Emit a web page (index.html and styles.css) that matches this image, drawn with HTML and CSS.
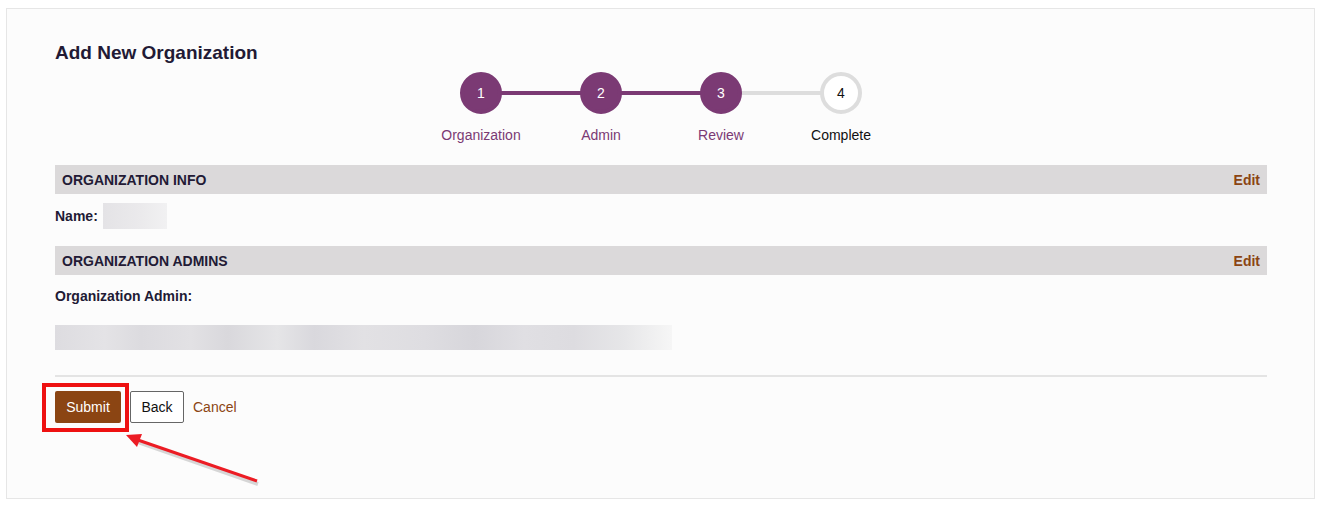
FILE: index.html
```html
<!DOCTYPE html>
<html lang="en">
<head>
    <meta charset="UTF-8">
    <meta name="viewport" content="width=device-width, initial-scale=1.0">
    <title>Add New Organization</title>
    <link rel="stylesheet" href="styles.css">
</head>
<body>
    <div class="card">
        <h1>Add New Organization</h1>

        <div class="stepper">
            <div class="step done">
                <div class="circle">1</div>
                <div class="label">Organization</div>
            </div>
            <div class="step done">
                <div class="circle">2</div>
                <div class="label">Admin</div>
            </div>
            <div class="step done">
                <div class="circle">3</div>
                <div class="label">Review</div>
            </div>
            <div class="step">
                <div class="circle">4</div>
                <div class="label">Complete</div>
            </div>
        </div>

        <div class="section-header">
            <span>ORGANIZATION INFO</span>
            <a href="#" class="edit-link">Edit</a>
        </div>
        <div class="name-row">
            <span class="field-label">Name:</span>
            <span class="blur-box"></span>
        </div>

        <div class="section-header second">
            <span>ORGANIZATION ADMINS</span>
            <a href="#" class="edit-link">Edit</a>
        </div>
        <div class="field-label admin-label">Organization Admin:</div>
        <div class="blur-bar"></div>

        <hr class="divider">

        <div class="actions">
            <span class="submit-wrap">
                <button type="button" class="btn-submit">Submit</button>
                <span class="highlight"></span>
                <svg class="arrow" width="150" height="60" viewBox="0 0 150 60">
                    <line x1="140" y1="54" x2="20" y2="12" stroke="rgba(0,0,0,0.15)" stroke-width="4" transform="translate(1,2)"/>
                    <line x1="140" y1="53" x2="18" y2="11" stroke="#ec1c24" stroke-width="3"/>
                    <polygon points="9,7 25,6 20,19" fill="#ec1c24"/>
                </svg>
            </span>
            <button type="button" class="btn-back">Back</button>
            <a href="#" class="cancel-link">Cancel</a>
        </div>
    </div>
</body>
</html>
```

FILE: styles.css
```css
body {
    font-family: "Liberation Sans", Arial, sans-serif;
    margin: 0;
    padding: 0;
    background-color: #fff;
    color: #221a35;
}

.card {
    margin: 8px 10px 9px 6px;
    height: 491px;
    box-sizing: border-box;
    background-color: #fcfcfc;
    border: 1px solid #e6e6e6;
    padding: 32px 47px 0 48px;
}

.card h1 {
    font-size: 19px;
    line-height: 24px;
    margin: 0;
    color: #221a35;
}

.stepper {
    display: flex;
    justify-content: center;
    margin-top: 7px;
}

.step {
    position: relative;
    width: 120px;
    display: flex;
    flex-direction: column;
    align-items: center;
}

/* connector line from the previous step */
.step + .step::before {
    content: "";
    position: absolute;
    top: 19px;
    left: -60px;
    width: 120px;
    height: 4px;
    background-color: #dddddd;
}

.step.done + .step.done::before {
    background-color: #7b3a74;
}

.circle {
    position: relative;
    z-index: 1;
    width: 42px;
    height: 42px;
    box-sizing: border-box;
    border-radius: 50%;
    border: 4px solid #dddddd;
    background-color: #fff;
    color: #111;
    font-size: 14px;
    display: flex;
    align-items: center;
    justify-content: center;
}

.step.done .circle {
    background-color: #7b3a74;
    border-color: #7b3a74;
    color: #fff;
}

.label {
    margin-top: 11px;
    font-size: 14px;
    line-height: 20px;
    color: #111;
}

.step.done .label {
    color: #7b3a74;
}

.section-header {
    display: flex;
    justify-content: space-between;
    align-items: center;
    height: 29px;
    padding: 0 7px;
    margin-top: 20px;
    background-color: #dbd9da;
    font-size: 14px;
    font-weight: bold;
    color: #221a35;
}

.section-header.second {
    margin-top: 17px;
}

.edit-link {
    color: #8b4513;
    text-decoration: none;
    font-size: 14px;
}

.field-label {
    font-size: 14px;
    font-weight: bold;
    color: #221a35;
}

.name-row {
    display: flex;
    align-items: center;
    gap: 5px;
    margin-top: 9px;
    height: 26px;
}

.blur-box {
    width: 64px;
    height: 26px;
    background: linear-gradient(90deg, #e4e3e6, #ebeaec 60%, #f1f1f2);
}

.admin-label {
    margin-top: 13px;
    line-height: 16px;
}

.blur-bar {
    width: 617px;
    height: 25px;
    margin-top: 21px;
    background: linear-gradient(90deg,
        #dddce0 0%, #e4e3e6 8%, #dcdbdf 14%, #e2e1e4 22%,
        #d9d8dc 28%, #e5e5e7 36%, #d9d8dd 42%, #e2e1e4 50%,
        #dedde1 60%, #d7d6db 68%, #e0dfe3 76%, #dddce0 84%,
        #e6e6e8 92%, #f6f6f6 100%);
}

.divider {
    border: none;
    border-top: 2px solid #e4e4e4;
    margin: 25px 0 0;
}

.actions {
    display: flex;
    align-items: center;
    gap: 9px;
    margin-top: 14px;
}

.submit-wrap {
    position: relative;
    display: inline-flex;
}

.btn-submit, .btn-back {
    font-family: "Liberation Sans", Arial, sans-serif;
    font-size: 14px;
    height: 32px;
    border-radius: 2px;
    cursor: pointer;
}

.btn-submit {
    width: 66px;
    background-color: #8b4513;
    color: #fff;
    border: none;
}

.btn-back {
    width: 54px;
    background-color: #fff;
    color: #111;
    border: 1px solid #666;
}

.cancel-link {
    font-size: 14px;
    color: #8b4513;
    text-decoration: none;
}

/* annotation overlay */
.highlight {
    position: absolute;
    left: -13px;
    top: -8px;
    width: 87px;
    height: 49px;
    box-sizing: border-box;
    border: 4px solid #ee1111;
    pointer-events: none;
}

.arrow {
    position: absolute;
    left: 62px;
    top: 37px;
    pointer-events: none;
}
```
